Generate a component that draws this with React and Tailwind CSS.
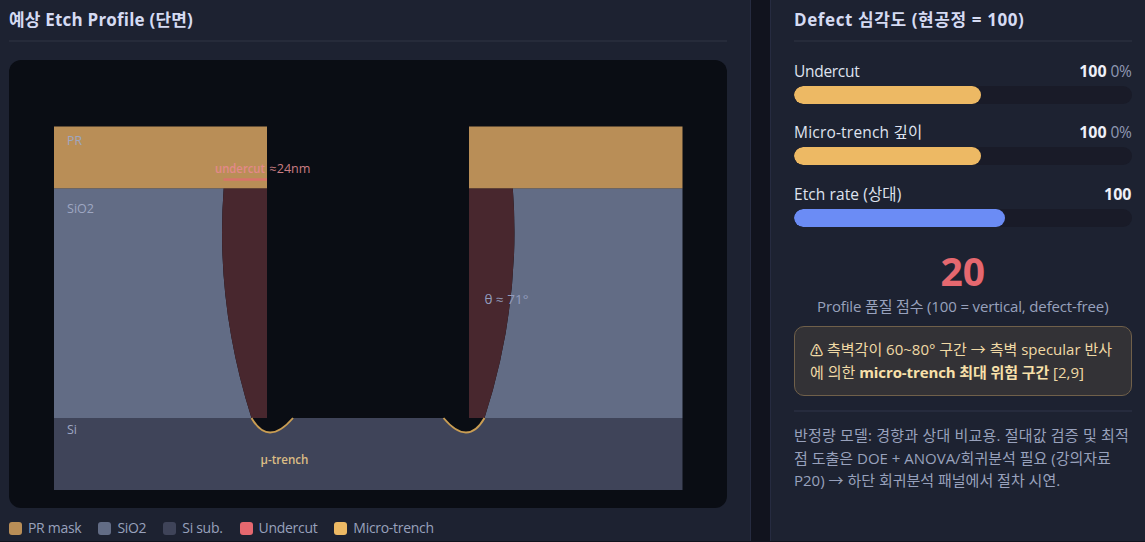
import clsx from 'clsx';

const legend = [
  { label: 'PR mask', color: 'bg-[#b98e57]' },
  { label: 'SiO2', color: 'bg-[#626c85]' },
  { label: 'Si sub.', color: 'bg-[#3f4459]' },
  { label: 'Undercut', color: 'bg-[#e5686f]' },
  { label: 'Micro-trench', color: 'bg-[#edb964]' },
];

const metrics = [
  { label: 'Undercut', value: 100, delta: '0%', width: 55.5, color: 'bg-[#edb964]', tracking: 'tracking-[-0.3px]' },
  { label: 'Micro-trench 깊이', value: 100, delta: '0%', width: 55.5, color: 'bg-[#edb964]', tracking: 'tracking-[0.2px]' },
  { label: 'Etch rate (상대)', value: 100, width: 62.5, color: 'bg-[#6b8cf5]', tracking: 'tracking-[0.1px]' },
];

function PanelTitle({ children, className }) {
  return (
    <h2 className={clsx('h-[41.5px] pt-2 border-b-2 border-[#262b3a] text-[17px] leading-6 font-bold text-[#d5dbf3] whitespace-nowrap', className)}>
      {children}
    </h2>
  );
}

function EtchProfile() {
  return (
    <svg viewBox="0 0 718 448" className="block w-[718px] h-[448px] mt-[18px] rounded-xl bg-[#0a0d14]">
      {/* substrate and oxide */}
      <rect x="45" y="358" width="628.5" height="72" fill="#3f4459" />
      <path d="M45 128.2H214.7Q206 243.5 242.5 358H45Z" fill="#626c85" />
      <path d="M673.5 128.2H503.8Q512.5 243.5 475.5 358H673.5Z" fill="#626c85" />

      {/* undercut */}
      <path d="M214.7 128.2Q206 243.5 242.5 358H258V128.2Z" fill="#48272e" />
      <path d="M503.8 128.2Q512.5 243.5 475.5 358H460V128.2Z" fill="#48272e" />

      {/* mask */}
      <rect x="45" y="66.5" width="213" height="61.8" fill="#b98e57" />
      <rect x="460" y="66.5" width="213.5" height="61.8" fill="#b98e57" />

      {/* micro-trenches */}
      <path d="M242.5 358Q259 387 284 358Z" fill="#0a0d14" />
      <path d="M475.5 358Q459 387 434.5 358Z" fill="#0a0d14" />
      <path d="M242.5 358Q259 387 284 358" fill="none" stroke="#c99d53" strokeWidth="1.9" />
      <path d="M475.5 358Q459 387 434.5 358" fill="none" stroke="#c99d53" strokeWidth="1.9" />

      <path d="M214.5 119.5H258" stroke="#d8736a" strokeWidth="2.6" />
      <g fontSize="12" fontWeight="500" fill="#9ea7c2">
        <text x="58" y="84.5" textLength="15" lengthAdjust="spacingAndGlyphs">PR</text>
        <text x="58" y="153" textLength="27" lengthAdjust="spacingAndGlyphs">SiO2</text>
        <text x="58" y="373.8" textLength="10" lengthAdjust="spacingAndGlyphs">Si</text>
        <text x="475.5" y="243.8" fill="#929cbd" textLength="44" lengthAdjust="spacingAndGlyphs">θ ≈ 71°</text>
        <text x="206" y="112.5" fill="#e3898a" fontWeight="600" textLength="50" lengthAdjust="spacingAndGlyphs">undercut</text>
        <text x="260.5" y="112.5" fill="#c97d82" textLength="41" lengthAdjust="spacingAndGlyphs">≈24nm</text>
        <text x="251.5" y="403.8" fill="#dcbd85" fontWeight="600" textLength="48" lengthAdjust="spacingAndGlyphs">μ-trench</text>
      </g>
    </svg>
  );
}

function Metric({ label, value, delta, width, color, tracking }) {
  return (
    <div className="h-[61.5px]">
      <div className="flex items-baseline justify-between h-6 leading-6 text-[15.5px] text-[#dfe3ef] whitespace-nowrap">
        <span className={tracking}>{label}</span>
        <span>
          <b className="font-bold text-[16px] text-[#eef0f8]">{value}</b>
          {delta && <span className="ml-1 text-[15.5px] tracking-[-0.4px] text-[#8f98b3]">{delta}</span>}
        </span>
      </div>
      <div className="mt-[3px] h-[18px] rounded-full bg-[#191b28] overflow-hidden">
        <div className={clsx('h-full rounded-full', color)} style={{ width: `${width}%` }} />
      </div>
    </div>
  );
}

export default function App() {
  return (
    <div className="flex gap-[19px] w-[1145px] h-[542px] overflow-hidden bg-[#11131e] font-['Open_Sans','Noto_Sans_CJK_KR',sans-serif]">
      <section className="w-[751px] h-[541px] shrink-0 pl-[9px] pr-[23px] bg-[#1d2231] border-r border-[#262b40]">
        <PanelTitle className="tracking-[0.2px]">예상 Etch Profile (단면)</PanelTitle>
        <EtchProfile />
        <div className="flex mt-[9.5px] text-[14px] leading-[22px] text-[#98a1bc] whitespace-nowrap">
          {legend.map((item) => (
            <div key={item.label} className="flex items-center gap-1.5 mr-[17px]">
              <span className={clsx('size-[13px] rounded-[3px]', item.color)} />
              <span className="tracking-[-0.3px]">{item.label}</span>
            </div>
          ))}
        </div>
      </section>

      <section className="w-[375px] h-[541px] shrink-0 pl-[23px] pr-[13.5px] bg-[#1d2231] border-l border-[#262b40]">
        <PanelTitle className="tracking-[0.6px]">Defect 심각도 (현공정 = 100)</PanelTitle>
        <div className="pt-[17px]">
          {metrics.map((m) => (
            <Metric key={m.label} {...m} />
          ))}
        </div>

        <div className="mt-[4.5px] text-center whitespace-nowrap">
          <div className="text-[39px] leading-[46px] font-bold text-[#e5686f]">20</div>
          <div className="mt-px text-[15px] leading-[23px] tracking-[-0.15px] text-[#98a1bc]">
            Profile 품질 점수 (100 = vertical, defect-free)
          </div>
        </div>

        <div className="mt-2 h-[70.5px] px-[15px] pt-[11px] rounded-[10px] border border-[#70604a] bg-[#333236] text-[15px] leading-[23.5px] text-[#f0d9a5] whitespace-nowrap">
          <div>
            <span className="inline-block w-[17px] text-[13px] leading-none font-bold">⚠</span>
            측벽각이 60~80° 구간 → 측벽 specular 반사
          </div>
          <div>
            에 의한 <b className="font-bold tracking-[-0.1px] text-[#f8e0aa]">micro-trench 최대 위험 구간</b> [2,9]
          </div>
        </div>

        <div className="mt-3.5 pt-3 border-t-2 border-[#262b3d] text-[15px] leading-[22.6px] text-[#98a1bc] whitespace-nowrap">
          <div className="tracking-[0.2px]">반정량 모델: 경향과 상대 비교용. 절대값 검증 및 최적</div>
          <div>점 도출은 DOE + ANOVA/회귀분석 필요 (강의자료</div>
          <div>P20) → 하단 회귀분석 패널에서 절차 시연.</div>
        </div>
      </section>
    </div>
  );
}
